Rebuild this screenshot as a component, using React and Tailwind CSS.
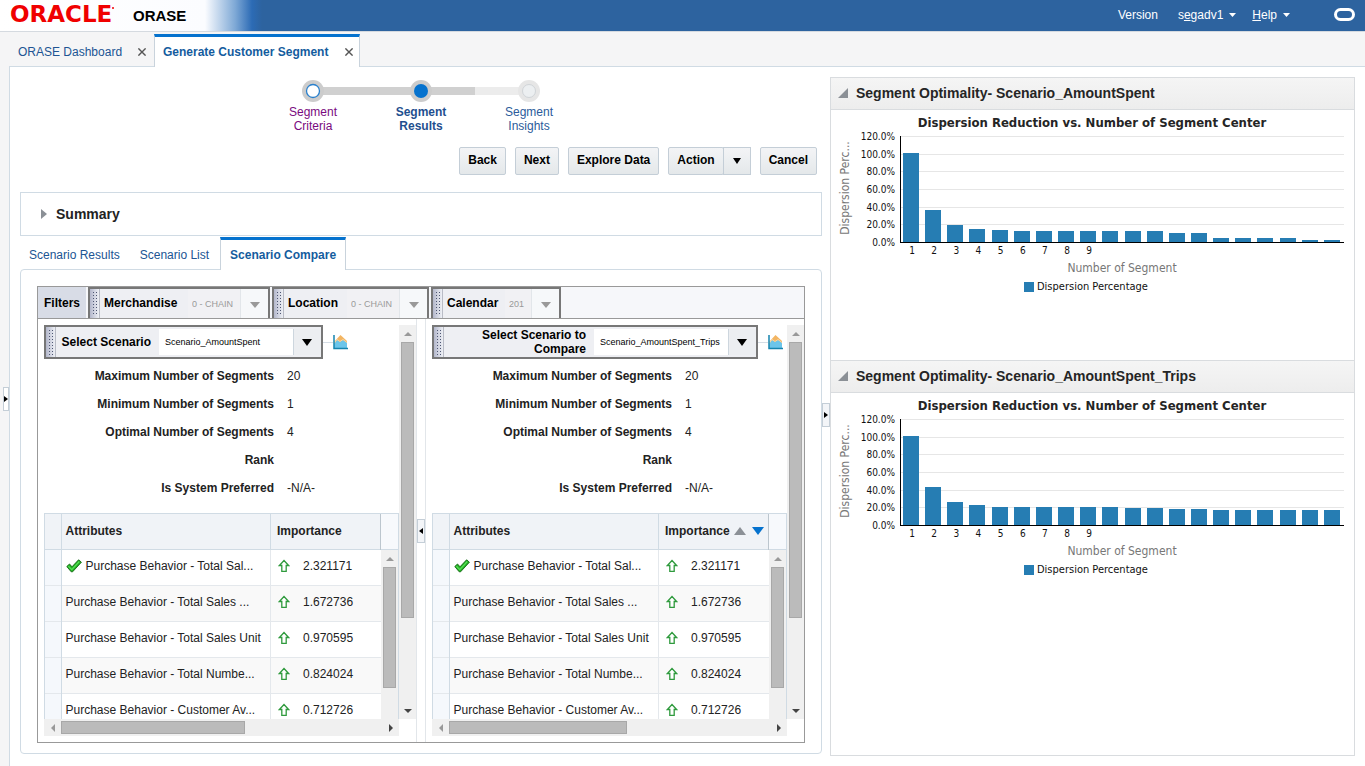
import React, { useState } from 'react';

const attributes = [
  { name: 'Purchase Behavior - Total Sal...', value: '2.321171', checked: true },
  { name: 'Purchase Behavior - Total Sales ...', value: '1.672736' },
  { name: 'Purchase Behavior - Total Sales Unit', value: '0.970595' },
  { name: 'Purchase Behavior - Total Numbe...', value: '0.824024' },
  { name: 'Purchase Behavior - Customer Av...', value: '0.712726' },
];

const details = [
  ['Maximum Number of Segments', '20'],
  ['Minimum Number of Segments', '1'],
  ['Optimal Number of Segments', '4'],
  ['Rank', ''],
  ['Is System Preferred', '-N/A-'],
];

const amountSpent = [101, 36, 19, 15, 14, 13, 13, 13, 13, 13, 13, 13, 10, 10, 4, 4, 4, 4, 2, 2];
const amountSpentTrips = [101, 43, 26, 23, 20, 20, 20, 20, 20, 20, 19, 19, 18, 18, 17, 17, 17, 17, 17, 17];

const Triangle = ({ dir = 'down', className = '' }) => {
  const points = {
    down: '0,0 10,0 5,10',
    up: '0,10 10,10 5,0',
    left: '10,0 10,10 0,5',
    right: '0,0 0,10 10,5',
    corner: '10,0 10,10 0,10',
  };
  return (
    <svg viewBox="0 0 10 10" preserveAspectRatio="none" className={`shrink-0 ${className}`} fill="currentColor">
      <polygon points={points[dir]} />
    </svg>
  );
};

const CloseIcon = () => (
  <svg viewBox="0 0 8 8" className="w-2 h-2" stroke="#555" strokeWidth="1.4">
    <path d="M0.4 0.4 L7.6 7.6 M7.6 0.4 L0.4 7.6" />
  </svg>
);

const ChartIcon = () => (
  <svg viewBox="0 0 16 16" className="w-4 h-4 shrink-0">
    <path d="M1 8 L7.5 1 L14 7 V14 H1 Z" fill="#f3b562" />
    <path d="M1 10 L4 6 L7 8 L10 6 L14 9 V14 H1 Z" fill="#6cc5ea" />
    <path d="M1 9.5 L4 5.5 L7 7.5 L10 5.5 L14 8.5" fill="none" stroke="#fbe3bd" strokeWidth="0.7" />
    <path d="M1 1 V14.5 H15" fill="none" stroke="#1584ae" strokeWidth="1.5" />
  </svg>
);

const CheckIcon = () => (
  <svg viewBox="0 0 16 14" className="w-4 h-3.5 shrink-0">
    <path d="M0.8 7.5 L3.5 5 L6 7.8 L12.6 0.8 L15.4 3.2 L6.6 12.8 L5.2 12.8 Z" fill="#22b022" stroke="#126512" strokeWidth="0.9" />
    <path d="M2.4 7.3 L5.8 10.6 L13.3 2.5" fill="none" stroke="#58e058" strokeWidth="1.2" />
  </svg>
);

const UpArrow = () => (
  <svg viewBox="0 0 12 14" className="w-3 h-3.5 shrink-0" fill="#fff" stroke="#2f9a3d" strokeWidth="1.3">
    <path d="M6 1.5 L10.6 6.5 H8.2 V12.4 H3.8 V6.5 H1.4 Z" />
  </svg>
);

const Grip = () => (
  <div className="w-2.5 shrink-0 border-r border-[#b9bcc6] bg-gradient-to-r from-[#b4b8cc] to-[#eef0f5] p-0.5">
    <div className="h-full w-1.5 bg-[radial-gradient(#4d5672_0.8px,transparent_1px)] bg-[length:3px_3px]" />
  </div>
);

const Filter = ({ label, value, width }) => (
  <div className={`flex border-2 border-b-0 border-[#777] bg-[#eeeff3] ${width}`}>
    <Grip />
    <label htmlFor={label} className="flex-1 pl-1 leading-[29px] font-bold text-black">{label}</label>
    <select id={label} disabled className="appearance-none bg-[#f1f1f4] text-[9px] text-[#999] pl-1 pr-1.5 overflow-hidden">
      <option>{value}</option>
    </select>
    <div className="w-7 pt-0.5 flex items-center justify-center bg-[#f6f8fa] border-l border-[#e2e6ea] text-[#999]">
      <Triangle className="w-2.5 h-1.5" />
    </div>
  </div>
);

const VScroll = ({ thumb, className = '' }) => (
  <div className={`flex flex-col items-center bg-[#f0f0f0] ${className}`}>
    <div className="h-[17px] flex items-center text-[#999]"><Triangle dir="up" className="w-2 h-1" /></div>
    <div className={`w-[13px] bg-[#bbb] border border-[#a8a8a8] ${thumb}`} />
  </div>
);

const Pane = ({ id, label, scenario, labelWidth, barWidth, selectWidth, formWidth, thumb, sorted }) => (
  <div className="flex-1 min-w-0 flex pl-1.5 pt-1.5 pb-1.5">
    <div className="flex-1 min-w-0">
      <div className="flex items-center">
        <div className={`flex h-[34px] border-2 border-[#777] bg-[#eeeff3] ${barWidth}`}>
          <Grip />
          <label htmlFor={id} className={`flex-1 self-center text-right font-bold leading-[14px] text-black ${labelWidth}`}>{label}</label>
          <select id={id} className={`appearance-none bg-white text-[9px] text-black px-1.5 my-0.5 ml-2 ${selectWidth}`}>
            <option>{scenario}</option>
          </select>
          <div className="w-7 pr-0.5 my-0.5 flex items-center justify-center bg-[#eceef1] border-l border-[#cdd6de] text-black">
            <Triangle className="w-2.5 h-[7px]" />
          </div>
        </div>
        <div className="w-2.5 h-px bg-[#d5dde5]" />
        <ChartIcon />
      </div>

      <dl className="pt-[3px]">
        {details.map(([name, value]) => (
          <div key={name} className="flex h-7 items-center">
            <dt className={`text-right font-bold text-[#222] ${formWidth}`}>{name}</dt>
            <dd className="pl-[13px]">{value}</dd>
          </div>
        ))}
      </dl>

      {/* Attribute table */}
      <div className="mt-[11px] flex h-[206px] overflow-hidden border-t border-l border-[#d0dbe4]">
        <table className="flex-1 self-start table-fixed border-collapse">
          <colgroup>
            <col className="w-4" />
            <col />
            <col className="w-[110px]" />
          </colgroup>
          <thead>
            <tr className="h-[35px] bg-[#f0f3f7] border-b border-[#d0dbe4] text-left text-[#222]">
              <th className="border-r border-[#d0dbe4]" />
              <th className="border-r border-[#d0dbe4] pl-1">Attributes</th>
              <th className="border-r border-[#bcc6ce] pl-1.5">
                <span className="flex items-center">
                  Importance
                  {sorted && <Triangle dir="up" className="w-3 h-2 ml-1 text-[#8b9096]" />}
                  {sorted && <Triangle className="w-3 h-2 ml-1.5 text-[#0572ce]" />}
                </span>
              </th>
            </tr>
          </thead>
          <tbody>
            {attributes.map((row) => (
              <tr key={row.name} className="h-9 border-b border-[#e4e8ec] even:bg-[#f9f9f9]">
                <td className="bg-[#f5f8fc] border-r border-[#d0dbe4]" />
                <td className="pl-1 pb-0.5 border-r border-[#e4e8ec] whitespace-nowrap">
                  <span className="flex items-center gap-1">
                    {row.checked && <CheckIcon />}
                    {row.name}
                  </span>
                </td>
                <td className="pl-[7px] pb-0.5">
                  <span className="flex items-center gap-[13px]">
                    <UpArrow />
                    {row.value}
                  </span>
                </td>
              </tr>
            ))}
          </tbody>
        </table>
        <div className="w-[18px] shrink-0 flex flex-col border-r border-[#d0dbe4]">
          <div className="h-9 bg-[#f7f9fc] border-b border-[#d0dbe4]" />
          <VScroll className="flex-1" thumb="h-[121px]" />
        </div>
      </div>
      <div className="flex h-[17px] items-center bg-[#f0f0f0]">
        <div className="w-[17px] flex justify-center text-[#999]"><Triangle dir="left" className="w-1 h-2" /></div>
        <div className={`h-[13px] bg-[#bbb] border border-[#a8a8a8] ${thumb}`} />
        <div className="ml-auto w-[17px] flex justify-center text-[#444]"><Triangle dir="right" className="w-1 h-2" /></div>
      </div>
    </div>
    <div className="w-[17px] mb-[17px] flex flex-col bg-[#f0f0f0]">
      <VScroll thumb="h-[276px]" />
      <div className="mt-auto h-[17px] flex items-center justify-center text-[#444]"><Triangle className="w-2 h-1" /></div>
    </div>
  </div>
);

const BarChart = ({ values }) => {
  const ticks = [0, 20, 40, 60, 80, 100, 120];
  const left = 70;
  const right = 513;
  const bottom = 132;
  const yFor = (v) => bottom - Math.round((v * 106) / 120);
  const step = (right - left) / values.length;

  return (
    <svg viewBox="0 0 523 250" className="block w-full font-['DejaVu_Sans_Condensed','DejaVu_Sans',sans-serif]">
      <text x="261" y="17" textAnchor="middle" className="text-[13px] font-bold" fill="#252525">
        Dispersion Reduction vs. Number of Segment Center
      </text>
      {ticks.map((t) => (
        <g key={t}>
          <rect x={left} y={yFor(t)} width={right - left} height="1" fill="#e6e6e6" />
          <text x="64" y={yFor(t) + 4} textAnchor="end" className="text-[10px]" fill="#111">{t}.0%</text>
        </g>
      ))}
      {values.map((v, i) => (
        <rect key={i} x={Math.round(left + 2 + i * step)} y={yFor(v)} width="16" height={bottom - yFor(v)} fill="#267db3" />
      ))}
      {values.slice(0, 9).map((v, i) => (
        <text key={i} x={left + 11 + i * step} y="144" textAnchor="middle" className="text-[10px]" fill="#111">{i + 1}</text>
      ))}
      <rect x={left - 1} y="26" width="1" height="107" fill="#000" />
      <rect x={left - 1} y={bottom} width={right - left + 1} height="1" fill="#000" />
      <text transform="translate(18 78) rotate(-90)" textAnchor="middle" className="text-[12px]" fill="#777">Dispersion Perc...</text>
      <text x="291" y="162" textAnchor="middle" className="text-[12px]" fill="#777">Number of Segment</text>
      <rect x="193" y="172" width="10" height="10" fill="#267db3" />
      <text x="206" y="180" className="text-[11px]" fill="#111">Dispersion Percentage</text>
    </svg>
  );
};

const ChartSection = ({ title, values }) => (
  <section>
    <h2 className="h-8 flex items-center gap-2 pl-[7px] pb-0.5 bg-gradient-to-b from-[#f5f5f5] to-[#ededed] border-b border-[#d9dcdf] text-sm font-bold text-[#252525]">
      <Triangle dir="corner" className="w-2.5 h-2.5 text-[#8b9096]" />
      {title}
    </h2>
    <BarChart values={values} />
  </section>
);

const buttonStyle = 'h-7 px-2 border border-[#c4ced7] rounded-xs bg-gradient-to-b from-[#f3f4f6] to-[#e4e8ea] font-bold text-black pb-0.5';

const App = () => {
  const [tab, setTab] = useState('Scenario Compare');

  return (
    <div className="min-h-screen flex flex-col bg-[#f5f5f6] font-['Liberation_Sans',Arial,sans-serif] text-xs text-[#222]">
      {/* Branding bar */}
      <header className="h-8 flex items-center border-b border-[#d5dae0] text-white bg-[linear-gradient(to_right,#fff_0,#fbfcff_205px,#7fa9d6_235px,#2c6bb5_252px,#2d639f_262px)]">
        <span className="pl-2.5 w-[122px] flex text-[23px] leading-[26px] pb-1 font-bold text-[#f00000] font-['DejaVu_Sans',sans-serif]">
          ORACLE
          <span className="w-0.5 h-0.5 mt-1.5 rounded-full bg-[#f00000]" />
        </span>
        <h1 className="pl-[11px] text-[15px] font-bold text-black">ORASE</h1>
        <nav className="ml-auto pb-0.5 flex items-center gap-5 pr-2.5">
          <a href="#version">Version</a>
          <a href="#user" className="flex items-center gap-1.5">
            <span>s<u>e</u>gadv1</span>
            <Triangle className="w-[7px] h-1" />
          </a>
          <a href="#help" className="-ml-1 flex items-center gap-1.5">
            <span><u>H</u>elp</span>
            <Triangle className="w-[7px] h-1" />
          </a>
          <svg viewBox="0 0 21 13" className="ml-6 w-[21px] h-[13px]" fill="none" stroke="#fff" strokeWidth="3">
            <rect x="1.5" y="1.5" width="18" height="10" rx="5" />
          </svg>
        </nav>
      </header>

      {/* Page tabs */}
      <div className="h-[34px] flex items-stretch pt-0.5">
        <div className="w-[154px] pl-[18px] pt-[3px] flex items-center gap-4">
          <a href="#dashboard" className="text-[#205493]">ORASE Dashboard</a>
          <button type="button" aria-label="Close ORASE Dashboard"><CloseIcon /></button>
        </div>
        <div className="relative z-10 -mb-px px-2 w-[206px] flex items-center justify-between pr-1.5 bg-white border-x border-[#c9d3dc] border-t-3 border-t-[#0572ce]">
          <a href="#segment" className="font-bold text-[#145c9e] whitespace-nowrap">Generate Customer Segment</a>
          <button type="button" aria-label="Close Generate Customer Segment"><CloseIcon /></button>
        </div>
      </div>

      <div className="flex-1 flex">
        <div className="w-[9px] shrink-0 pt-[321px] flex justify-end">
          <button type="button" aria-label="Expand panel" className="w-1.5 h-6 border border-[#c4ced7] bg-white flex items-center justify-center text-black">
            <Triangle dir="right" className="w-1 h-1.5" />
          </button>
        </div>

        <main className="flex-1 grid grid-cols-[minmax(0,812fr)_8px_minmax(0,535fr)] bg-white border-l border-t border-b border-[#d0dbe4]">
          <div className="pl-2.5 pt-3 pb-3">
            {/* Train steps */}
            <div className="w-[324px] mx-auto">
              <svg viewBox="0 0 324 24" className="block w-full h-6">
                <rect x="54" y="8" width="162" height="8" fill="#d0d0d0" />
                <rect x="216" y="8" width="54" height="8" fill="#ececec" />
                <circle cx="54" cy="12" r="11" fill="#ccc" />
                <circle cx="54" cy="12" r="6.5" fill="#fff" stroke="#2a80cc" strokeWidth="1.3" />
                <circle cx="162" cy="12" r="11" fill="#ccc" />
                <circle cx="162" cy="12" r="7" fill="#0572ce" />
                <circle cx="270" cy="12" r="11" fill="#e6e6e6" />
                <circle cx="270" cy="12" r="6.5" fill="#eceff1" stroke="#d0d4d8" />
              </svg>
              <div className="grid grid-cols-3 mt-0.5 text-center leading-[14px]">
                <a href="#criteria" className="text-[#7a0a80]">Segment<br />Criteria</a>
                <a href="#results" className="font-bold text-[#1f4f8f]">Segment<br />Results</a>
                <a href="#insights" className="text-[#2b5b9b]">Segment<br />Insights</a>
              </div>
            </div>

            <div className="mt-3.5 mr-[5px] flex justify-end gap-[9px]">
              <button type="button" className={buttonStyle}>Back</button>
              <button type="button" className={buttonStyle}>Next</button>
              <button type="button" className={buttonStyle}>Explore Data</button>
              <div className="flex">
                <button type="button" className={buttonStyle}>Action</button>
                <button type="button" aria-label="More actions" className="-ml-px w-7 h-7 flex items-center justify-center border border-[#c4ced7] bg-gradient-to-b from-[#f3f4f6] to-[#e4e8ea] text-black">
                  <Triangle className="w-2 h-1.5" />
                </button>
              </div>
              <button type="button" className={buttonStyle}>Cancel</button>
            </div>

            <button type="button" className="mt-[17px] w-full h-11 flex items-center gap-[9px] pl-5 border border-[#d0dbe4] text-sm font-bold text-[#222]">
              <Triangle dir="right" className="w-1.5 h-2.5 text-[#8b9096]" />
              Summary
            </button>

            {/* Scenario tabs */}
            <div className="mt-px flex h-[33px] relative z-10 text-[#205493]">
              {['Scenario Results', 'Scenario List', 'Scenario Compare'].map((name) => (
                <button
                  key={name}
                  type="button"
                  onClick={() => setTab(name)}
                  className={tab === name
                    ? 'px-[9px] border-x border-[#c9d3dc] border-t-3 border-t-[#0572ce] bg-white font-bold text-[#145c9e]'
                    : 'pl-[9px] pr-[11px] pt-0.5'}
                >
                  {name}
                </button>
              ))}
            </div>

            <div className="-mt-px border border-[#d0dbe4] rounded-sm p-4 pb-2.5">
              <div className="border border-[#999]">
                <div className="flex gap-0.5 h-8 bg-[#f6f7fa] border-b border-[#999]">
                  <div className="w-[48px] flex items-center justify-center bg-[#d8dce6] font-bold text-black">Filters</div>
                  <Filter label="Merchandise" value="0 - CHAIN" width="w-[182px]" />
                  <Filter label="Location" value="0 - CHAIN" width="w-[157px]" />
                  <Filter label="Calendar" value="201" width="w-[130px]" />
                </div>

                <div className="flex">
                  <Pane
                    id="scenario"
                    label="Select Scenario"
                    scenario="Scenario_AmountSpent"
                    barWidth="w-[279px]"
                    selectWidth="w-[134px]"
                    formWidth="w-[230px]"
                    thumb="w-[184px]"
                  />
                  <div className="w-2.5 border-x border-[#e2e6ea] flex items-center">
                    <button type="button" aria-label="Collapse panel" className="w-2 h-6 border border-[#c4ced7] bg-[#f3f5f8] flex items-center justify-center text-black">
                      <Triangle dir="left" className="w-1 h-1.5" />
                    </button>
                  </div>
                  <Pane
                    id="compare"
                    label="Select Scenario to Compare"
                    scenario="Scenario_AmountSpent_Trips"
                    labelWidth="pl-6"
                    barWidth="w-[326px]"
                    selectWidth="w-[134px]"
                    formWidth="w-[240px]"
                    thumb="w-[178px]"
                    sorted
                  />
                </div>
              </div>
            </div>
          </div>

          <div className="pt-[336px]">
            <button type="button" aria-label="Expand charts" className="w-2 h-6 border border-[#c4ced7] bg-[#f3f5f8] flex items-center justify-center text-black">
              <Triangle dir="right" className="w-1 h-1.5" />
            </button>
          </div>

          {/* Charts */}
          <aside className="mt-2.5 mr-2.5 mb-2.5 border border-[#d9dcdf]">
            <ChartSection title="Segment Optimality- Scenario_AmountSpent" values={amountSpent} />
            <div className="border-t border-[#d9dcdf]">
              <ChartSection title="Segment Optimality- Scenario_AmountSpent_Trips" values={amountSpentTrips} />
            </div>
          </aside>
        </main>
      </div>
    </div>
  );
};

export default App;
